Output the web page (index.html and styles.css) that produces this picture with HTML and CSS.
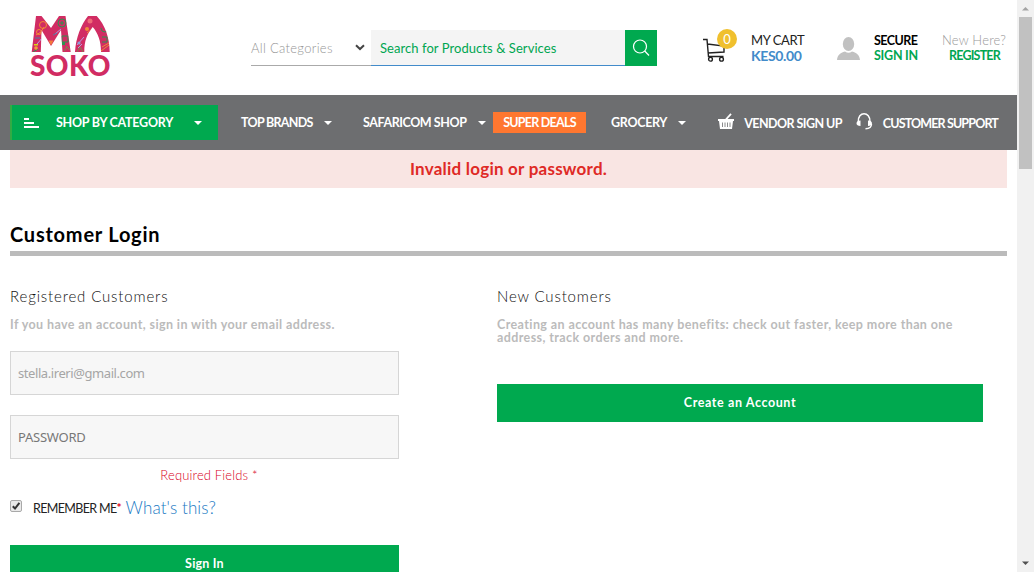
FILE: index.html
```html
<!DOCTYPE html>
<html lang="en">
<head>
<meta charset="utf-8">
<title>Customer Login</title>
<link rel="stylesheet" href="styles.css">
</head>
<body>
<div class="window">
<div class="page">
  <header class="header">
    <a class="logo">
      <svg class="logo-mark" width="80" height="38" viewBox="0 0 80 38">
        <defs>
          <clipPath id="mark"><path d="M5 1H10.500L20 13L28 1H34.500L39.700 37H31.500L30 15L20 31L10.500 15L9.800 37H.7ZM44 37C45 22 50 10 57 1H65.700C74 10 78.500 22 78.700 37H70C70 26 67 18 61.700 12C56 19 53.300 26 53.300 37Z"/></clipPath>
        </defs>
        <g clip-path="url(#mark)">
          <rect width="80" height="38" fill="#d12c63"/>
          <g fill="none" stroke-width="1">
            <g stroke="#f28a35"><circle cx="12" cy="10" r="3.500"/><circle cx="8" cy="17" r="2.500"/><path d="M5 20l5-3 3-5M56 18l5-4M71 32l7-4M70 36l8-6"/></g>
            <g stroke="#2f9150"><circle cx="31" cy="8" r="4"/><path d="M29 8h4M31 6v4M31 21h6v6h-6zM70 13a4 4 0 1 0 4-4M71 22h5v5h-5M2 37l5-3"/></g>
            <g stroke="#b79be0"><path d="M6 29l6-7M24 19l6-5M46 30l7-8M47 33l4-4"/></g>
            <g stroke="#7a8a4a"><path d="M46 37l3-5 3 5M35 31l4 4M33 36l3-4"/></g>
            <path d="M4 23h5M22 20l4-2" stroke="#4d7fa8"/>
          </g>
          <path d="M17.500 25.500h5l-2.500 5z" fill="#f37a3c"/><path d="M3 29h4v1.500H3z" fill="#d9d514"/><circle cx="5" cy="33" r="1.800" fill="#f2a13a"/><circle cx="59" cy="6" r="2.500" fill="#ef6a78"/><circle cx="56" cy="14" r="2" fill="#f08a3a"/><path d="M31 27h3v3h-3z" fill="#2f9150"/><circle cx="48" cy="28" r="1.600" fill="#8e9bd8"/>
        </g>
      </svg>
      <span class="logo-word">SOKO</span>
    </a>
    <div class="search">
      <div class="cats"><span>All Categories</span>
        <svg width="10" height="7" viewBox="0 0 10 7"><path d="M1 1.200L5 5L9 1.200" fill="none" stroke="#444" stroke-width="2"/></svg>
      </div>
      <div class="query"><span>Search for Products &amp; Services</span></div>
      <div class="go"><svg width="18" height="18" viewBox="0 0 18 18" fill="none" stroke="#fff" stroke-width="1.200"><circle cx="8" cy="7.500" r="6.500"/><path d="M12.700 12L17 16.500"/></svg></div>
    </div>
    <div class="cart">
      <svg width="24" height="24" viewBox="0 0 24 24" fill="none" stroke="#222" stroke-width="1.400"><path d="M0 1.500H4L5.500 18.500H20.500M4.500 6L21 8V14L5 15"/><circle cx="7.500" cy="21.200" r="1.900"/><circle cx="18.500" cy="21.200" r="1.900"/></svg>
      <span class="count">0</span>
    </div>
    <div class="pair cart-text"><span class="my-cart">MY CART</span><b class="total">KES0.00</b></div>
    <svg class="user" width="23" height="23" viewBox="0 0 23 23" fill="#c1c1c1"><ellipse cx="11.500" cy="7" rx="5.700" ry="7"/><path d="M0 23C.5 18 3 16 8 14.500Q11.500 17 15 14.500C20 16 22.500 18 23 23Z"/></svg>
    <div class="pair secure"><b class="sec">SECURE</b><b class="green sign">SIGN IN</b></div>
    <div class="pair register"><span class="new-here">New Here?</span><b class="green reg">REGISTER</b></div>
  </header>
  <nav class="nav">
    <div class="shop"><svg width="15" height="10" viewBox="0 0 15 10" fill="#fff"><path d="M0 0H5V2H0zM0 4H10V6H0zM0 8H15V10H0z"/></svg><span class="t-shop">SHOP BY CATEGORY</span><i class="caret"></i></div>
    <div class="item brands"><span>TOP BRANDS</span><i class="caret"></i></div>
    <div class="item saf"><span>SAFARICOM SHOP</span><i class="caret"></i></div>
    <div class="deals"><span>SUPER DEALS</span></div>
    <div class="item grocery"><span>GROCERY</span><i class="caret"></i></div>
    <div class="item vendor"><svg width="16" height="16" viewBox="0 0 16 16"><path d="M0 6H16V8H15L14 16H2L1 8H0Z" fill="#fff"/><path d="M7.500 7L13 .8" stroke="#fff" stroke-width="1.800"/><path d="M4.500 9.500V14M7 9.500V14M9.500 9.500V14M12 9.500V14" stroke="#6d6e70" stroke-width=".8"/></svg><span>VENDOR SIGN UP</span></div>
    <div class="item support"><svg width="17" height="17" viewBox="0 0 17 17" fill="none" stroke="#fff"><path d="M2.300 9C1.500-2 14.500-2 14 9" stroke-width="1.500"/><path d="M4.500 7.500V13C2 13 .5 12 .5 10.300S2 7.800 4.500 7.500ZM12 7.500V13C14.500 13 16 12 16 10.300S14.500 7.800 12 7.500Z" fill="#fff" stroke="none"/><path d="M15.500 11C15.500 14 14 15.500 9.500 15.700" stroke-width="1.400"/></svg><span>CUSTOMER SUPPORT</span></div>
  </nav>
  <main class="main">
    <div class="alert"><span>Invalid login or password.</span></div>
    <h1 class="title"><span>Customer Login</span></h1>
    <div class="columns">
      <section class="col-login">
        <h2 class="sub"><span>Registered Customers</span></h2>
        <p class="note"><span>If you have an account, sign in with your email address.</span></p>
        <div class="field"><span class="t-mail">stella.ireri@gmail.com</span></div>
        <div class="field second"><span class="t-pass">PASSWORD</span></div>
        <div class="required"><span>Required Fields *</span></div>
        <div class="remember">
          <svg width="12" height="12" viewBox="0 0 12 12"><rect x=".5" y=".5" width="11" height="11" rx="1.500" fill="#e9e9e9" stroke="#a9a9a9"/><path d="M2.800 6.200L5 8.500L9.400 2.800" fill="none" stroke="#333" stroke-width="2"/></svg>
          <span class="t-rem">REMEMBER ME</span><b class="star">*</b><a class="what">What's this?</a>
        </div>
        <div class="button signin"><span>Sign In</span></div>
      </section>
      <section class="col-new">
        <h2 class="sub"><span>New Customers</span></h2>
        <p class="note"><span>Creating an account has many benefits: check out faster, keep more than one</span><br><span>address, track orders and more.</span></p>
        <div class="button create"><span>Create an Account</span></div>
      </section>
    </div>
  </main>
</div>
<div class="scrollbar">
  <svg width="17" height="17" viewBox="0 0 17 17"><path d="M5 10.500L8.500 7L12 10.500Z" fill="#a3a3a3"/></svg>
  <div class="thumb"></div>
  <svg class="down" width="17" height="17" viewBox="0 0 17 17"><path d="M5 6.500L8.500 10L12 6.500Z" fill="#505050"/></svg>
</div>
</div>
</body>
</html>
```
FILE: styles.css
```css
* { box-sizing: border-box; }
body { margin: 0; font-family: Lato, "Liberation Sans", sans-serif; font-size: 13px; color: #222; background: #fff; }
.window { display: flex; width: 1034px; height: 572px; overflow: hidden; }
.page { width: 1017px; height: 572px; overflow: hidden; }
span, b, a { white-space: nowrap; }
svg, .caret { flex-shrink: 0; }
h1, h2, p { margin: 0; }

.header { display: flex; height: 95px; align-items: flex-start; }
.logo { width: 80px; margin: 15px 0 0 31px; display: flex; flex-direction: column; }
.logo-word { font-size: 28px; line-height: 27px; font-weight: 900; color: #d12c63; margin: -1px 0 0 -1px; letter-spacing: .4px; }
.search { display: flex; height: 36px; margin: 30px 0 0 140px; }
.cats { width: 120px; border-bottom: 1px solid #aaa; display: flex; align-items: center; justify-content: space-between; padding-right: 6px; color: #959595; font-weight: 300; letter-spacing: .3px; }
.query { width: 254px; background: #f4f4f4; border-bottom: 1px solid #428bca; color: #00a651; display: flex; align-items: center; padding-left: 9px; letter-spacing: .06px; }
.go { width: 32px; background: #00a94f; display: flex; align-items: center; justify-content: center; }
.cart { width: 36px; margin: 29px 0 0 46px; position: relative; }
.cart svg { margin-top: 9px; display: block; }
.count { position: absolute; left: 14px; top: 0; width: 20px; height: 20px; border-radius: 10px; background: #f0c02e; color: #fff; text-align: center; line-height: 20px; }
.pair { display: flex; flex-direction: column; align-items: flex-start; line-height: 16px; }
.cart-text { width: 86px; margin: 32px 0 0 12px; }
.my-cart { letter-spacing: -.4px; }
.total { color: #428bca; font-size: 14px; letter-spacing: -.35px; }
.user { margin-top: 37px; }
.secure { width: 68px; margin: 33px 0 0 14px; color: #000; line-height: 15px; font-size: 12.5px; }
.sec { letter-spacing: -.55px; }
.sign { letter-spacing: -.25px; }
.register { margin-top: 33px; line-height: 15px; font-size: 12.5px; }
.new-here { color: #999; font-size: 13px; font-weight: 300; letter-spacing: .2px; }
.reg { margin-left: 7px; letter-spacing: -.8px; }
.green { color: #00a651; }

.nav { height: 55px; background: #6d6e70; display: flex; align-items: center; padding-left: 10px; color: #fff; font-weight: 700; font-size: 12.5px; }
.nav span { margin-top: -1px; }
.shop { width: 208px; height: 35px; background: #00a94f; border-left: 2px solid #33aa44; display: flex; align-items: center; padding: 0 16px 0 12px; }
.shop span { margin-left: 17px; letter-spacing: -.25px; }
.shop .caret { margin-left: auto; }
.caret { width: 0; height: 0; border: 4px solid transparent; border-top-color: #fff; border-bottom: 0; }
.item { display: flex; align-items: center; justify-content: space-between; }
.brands { width: 91px; margin-left: 23px; letter-spacing: -.7px; }
.saf { width: 123px; margin-left: 31px; letter-spacing: -.43px; }
.deals { width: 93px; height: 21px; background: #ff7730; margin-left: 7px; display: flex; align-items: center; justify-content: center; letter-spacing: -.75px; }
.grocery { width: 75px; margin-left: 25px; letter-spacing: -.3px; }
.vendor { width: 124px; margin-left: 32px; letter-spacing: -.55px; }
.support { width: 142px; margin-left: 14px; letter-spacing: -.85px; }
.vendor span, .support span { margin-top: 1px; }
.vendor svg, .support svg { margin-top: -3px; }

.main { padding: 0 10px; }
.alert { height: 38px; background: #f9e5e3; color: #df2a26; font-size: 17px; font-weight: 700; display: flex; align-items: center; justify-content: center; letter-spacing: .23px; padding-bottom: 1px; }
.title { height: 68px; border-bottom: 5px solid #bbb; font-size: 20px; line-height: 24px; font-weight: 700; color: #000; padding-top: 34px; letter-spacing: .77px; }
.columns { display: flex; gap: 98px; padding-top: 30px; }
.col-login { width: 389px; }
.col-new { width: 486px; }
.sub { font-size: 15px; line-height: 20px; font-weight: 300; color: #111; height: 32px; letter-spacing: .85px; }
.note { font-size: 12.5px; line-height: 13px; font-weight: 700; color: #bbb; height: 33px; letter-spacing: .4px; }
.field { height: 44px; border: 1px solid #d6d6d6; background: #f7f7f7; padding-left: 7px; display: flex; align-items: center; font-family: "Noto Sans", sans-serif; color: #a5a5a5; font-size: 13px; letter-spacing: -.42px; }
.second { margin-top: 20px; color: #777; letter-spacing: -.25px; }
.required { height: 34px; line-height: 33px; color: #d8001c; display: flex; justify-content: center; padding-left: 9px; font-weight: 300; letter-spacing: .15px; }
.remember { height: 52px; display: flex; align-items: flex-start; line-height: 30px; }
.remember svg { margin: 7px 11px 0 0; }
.t-rem { font-size: 12.5px; letter-spacing: -.65px; line-height: 31px; }
.star { color: #e00020; font-size: 12px; }
.what { font-size: 17px; color: #1979c3; margin-left: 4px; font-weight: 300; letter-spacing: .1px; }
.button { height: 38px; background: #00a94f; color: #fff; font-weight: 700; font-size: 12.5px; display: flex; align-items: center; justify-content: center; padding-bottom: 1px; }
.signin { letter-spacing: .2px; }
.create { margin-top: 33px; letter-spacing: .6px; }

.scrollbar { width: 17px; height: 572px; background: #f1f1f1; display: flex; flex-direction: column; }
.thumb { width: 13px; height: 152px; margin-left: 2px; background: #c1c1c1; }
.down { margin-top: auto; }
```
